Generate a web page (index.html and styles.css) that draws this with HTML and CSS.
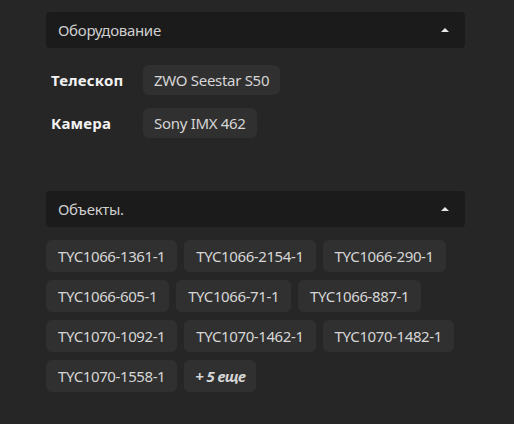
FILE: index.html
```html
<!DOCTYPE html>
<html lang="ru">
<head>
<meta charset="utf-8">
<link rel="stylesheet" href="styles.css">
</head>
<body>
<div class="wrap">
  <section class="panel">
    <div class="head"><span>Оборудование</span><span class="caret"></span></div>
    <div class="equip">
      <div class="row"><span class="label">Телескоп</span><span class="chip">ZWO Seestar S50</span></div>
      <div class="row"><span class="label">Камера</span><span class="chip">Sony IMX 462</span></div>
    </div>
  </section>
  <section class="panel objects">
    <div class="head"><span>Объекты.</span><span class="caret"></span></div>
    <div class="chips">
      <span class="chip">TYC1066-1361-1</span>
      <span class="chip">TYC1066-2154-1</span>
      <span class="chip">TYC1066-290-1</span>
      <span class="chip">TYC1066-605-1</span>
      <span class="chip">TYC1066-71-1</span>
      <span class="chip">TYC1066-887-1</span>
      <span class="chip">TYC1070-1092-1</span>
      <span class="chip">TYC1070-1462-1</span>
      <span class="chip">TYC1070-1482-1</span>
      <span class="chip">TYC1070-1558-1</span>
      <span class="chip more">+ 5 еще</span>
    </div>
  </section>
</div>
</body>
</html>
```
FILE: styles.css
```css
html, body {
  margin: 0;
  padding: 0;
  background: #262626;
}
body {
  font-family: "Noto Sans", "Open Sans", sans-serif;
  font-size: 15px;
  letter-spacing: -0.3px;
  color: #d4d4d4;
  width: 514px;
  height: 424px;
  overflow: hidden;
}
.wrap {
  padding: 12px 49px 0 46px;
}
.head {
  height: 36px;
  background: #1b1b1b;
  border-radius: 4px;
  display: flex;
  align-items: center;
  justify-content: space-between;
  padding: 0 16px 0 12px;
  color: #cfcfcf;
}
.caret {
  width: 0;
  height: 0;
  border-left: 4px solid transparent;
  border-right: 4px solid transparent;
  border-bottom: 4px solid #e8e8e8;
}
.equip {
  display: flex;
  flex-direction: column;
  gap: 13px;
  padding: 17px 0 0 5px;
}
.row {
  display: flex;
  align-items: center;
}
.label {
  width: 92px;
  font-weight: 700;
  letter-spacing: 0.2px;
  color: #f2f2f2;
}
.chip {
  display: inline-flex;
  align-items: center;
  height: 30px;
  padding: 0 11px;
  background: #303030;
  border-radius: 6px;
  color: #d6d6d6;
  white-space: nowrap;
}
.objects {
  margin-top: 53px;
}
.chips {
  display: flex;
  flex-wrap: wrap;
  gap: 8px 7px;
  padding-top: 13px;
}
.chips .chip {
  height: 32px;
  padding: 0 12px;
  letter-spacing: -0.4px;
}
.chips .more {
  font-weight: 700;
  font-style: italic;
  letter-spacing: -0.6px;
  padding: 0 11px;
}
```
